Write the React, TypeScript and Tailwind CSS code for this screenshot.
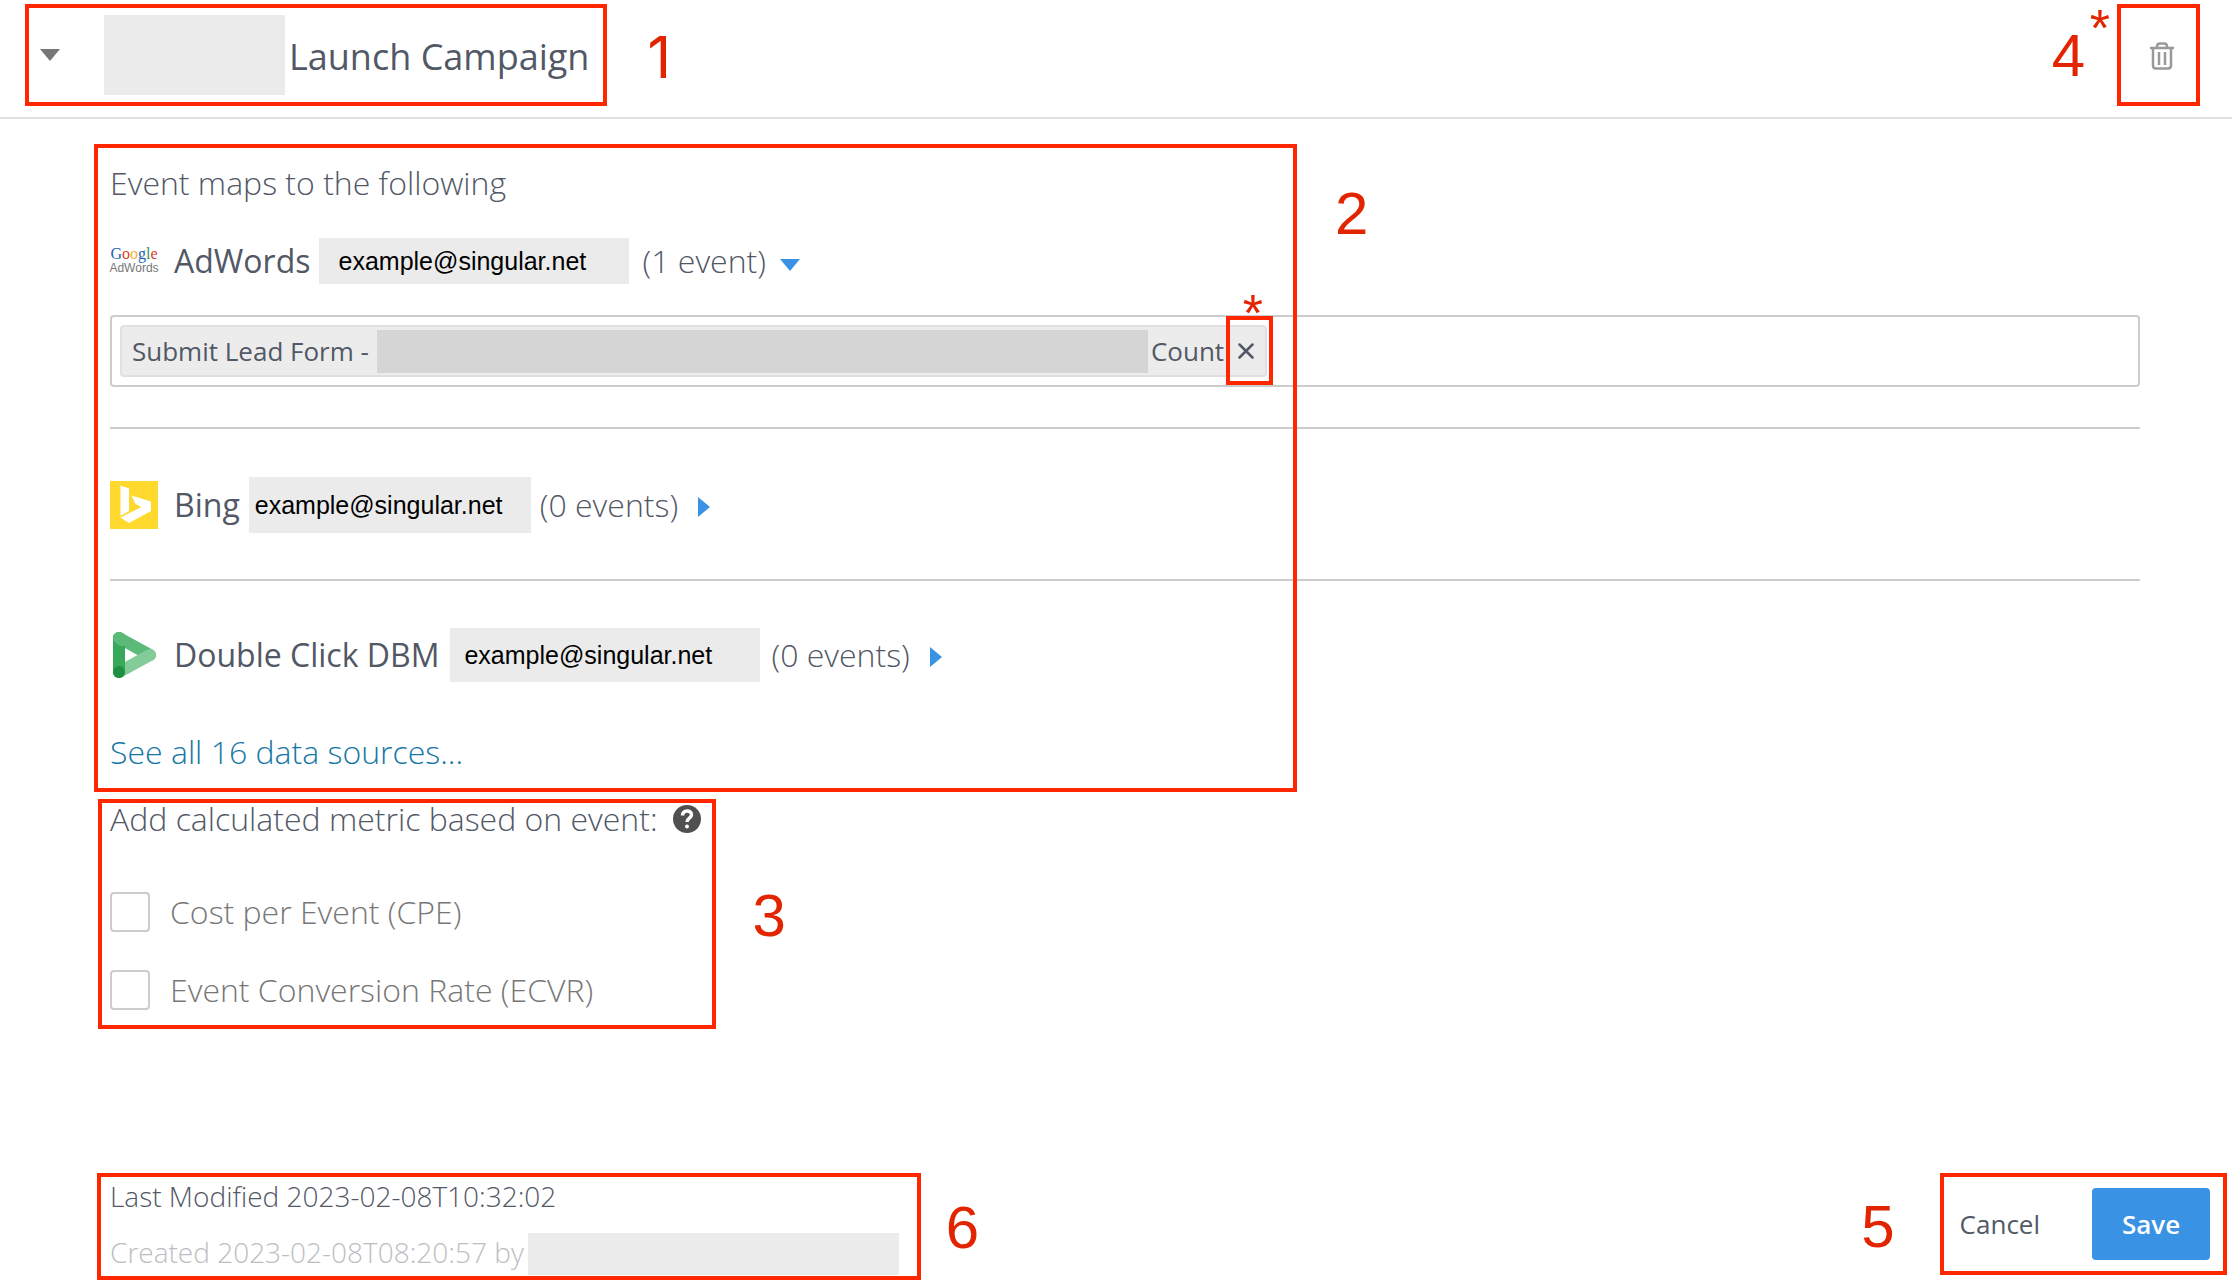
import { useState, type ReactNode } from 'react'
import clsx from 'clsx'

interface FrameProps {
  className?: string
}

function Frame({ className = 'inset-0' }: FrameProps) {
  return (
    <div
      className={clsx(
        'pointer-events-none absolute border-4 border-[#ff2600]',
        className
      )}
    />
  )
}

interface MarkProps {
  className: string
  children: ReactNode
}

function Mark({ className, children }: MarkProps) {
  return (
    <span
      className={clsx(
        'pointer-events-none absolute leading-none text-[#e22400]',
        className
      )}
    >
      {children}
    </span>
  )
}

interface CaretProps {
  open: boolean
  className: string
}

function Caret({ open, className }: CaretProps) {
  return open ? (
    <svg width="20" height="12" viewBox="0 0 20 12" className={className}>
      <path d="M0 0h20L10 12z" fill="currentColor" />
    </svg>
  ) : (
    <svg width="12" height="20" viewBox="0 0 12 20" className={className}>
      <path d="M0 0l12 10L0 20z" fill="currentColor" />
    </svg>
  )
}

function AdWordsLogo() {
  return (
    <span className="flex w-12 shrink-0 flex-col items-center leading-none">
      <span className="font-['Liberation_Serif',serif] text-[16px] leading-[14px]">
        <span className="text-[#1a62b5]">G</span>
        <span className="text-[#dc3a2c]">o</span>
        <span className="text-[#f0b51e]">o</span>
        <span className="text-[#1a62b5]">g</span>
        <span className="text-[#2f9a48]">l</span>
        <span className="text-[#dc3a2c]">e</span>
      </span>
      <span className="font-['Liberation_Sans',sans-serif] text-[12px] leading-[14px] text-[#777]">
        AdWords
      </span>
    </span>
  )
}

function BingLogo() {
  return (
    <svg width="48" height="48" viewBox="0 0 48 48" className="shrink-0">
      <path d="M0 0h48v48H0z" fill="#ffd92e" />
      <path d="M10.500 4.500l8.500 3V30l-8.500 5z" fill="#fff" />
      <path
        d="M10.500 36.500l21-10.500-6-3-4-8.500 19.500 6V30L19 42z"
        fill="#fff"
      />
    </svg>
  )
}

function DbmLogo() {
  return (
    <svg
      width="48"
      height="48"
      viewBox="0 0 48 48"
      fill="none"
      strokeWidth="12"
      strokeLinecap="round"
      className="shrink-0"
    >
      <path d="M9 7l31 17" stroke="#5cba78" />
      <path d="M9 41l31-17" stroke="#84cb9a" />
      <path d="M9 7v34" stroke="#38a85a" />
      <path d="M9 7l3 2" stroke="#5cba78" />
      <circle cx="9" cy="41" r="6" fill="#1f8f42" />
    </svg>
  )
}

function TrashIcon() {
  return (
    <svg
      width="24"
      height="28"
      viewBox="0 0 24 28"
      fill="none"
      stroke="#999"
      strokeWidth="2.500"
    >
      <path d="M0 6h24M7 6V4.500q0-3 3-3h4q3 0 3 3V6M3 6v17.500q0 3 3 3h12q3 0 3-3V6" />
      <path d="M9 10v13M15 10v13" />
    </svg>
  )
}

function HelpIcon() {
  return (
    <svg width="28" height="28" viewBox="0 0 28 28">
      <circle cx="14" cy="14" r="14" fill="#505050" />
      <path
        d="M9.500 10.500c0-6 9-6 9-.8 0 3.600-4.500 3.300-4.500 7.300"
        fill="none"
        stroke="#fff"
        strokeWidth="3.500"
      />
      <circle cx="14" cy="21.500" r="2" fill="#fff" />
    </svg>
  )
}

interface SourceRowProps {
  logo: ReactNode
  name: string
  count: string
  emailClass: string
  defaultOpen?: boolean
  className: string
}

function SourceRow({
  logo,
  name,
  count,
  emailClass,
  defaultOpen = false,
  className,
}: SourceRowProps) {
  const [open, setOpen] = useState(defaultOpen)

  return (
    <div className={clsx('flex items-center text-[32px] leading-10', className)}>
      {logo}
      <span className="ml-4">{name}</span>
      <span
        className={clsx(
          "flex items-center bg-[#ebebeb] font-['Liberation_Sans',sans-serif] text-[25px] text-black",
          emailClass
        )}
      >
        example@singular.net
      </span>
      <button
        type="button"
        onClick={() => setOpen(!open)}
        className="flex items-center font-light"
      >
        {count}
        <Caret
          open={open}
          className={clsx(
            'text-[#3a92e4]',
            open ? 'mt-2 ml-[14px]' : 'mt-1 ml-5'
          )}
        />
      </button>
    </div>
  )
}

interface MetricProps {
  id: string
  label: string
}

function Metric({ id, label }: MetricProps) {
  return (
    <div className="flex items-center gap-5">
      <input
        id={id}
        type="checkbox"
        className="size-10 shrink-0 appearance-none rounded-sm border-2 border-[#ccc] bg-white checked:bg-[#3a92e4]"
      />
      <label
        htmlFor={id}
        className="text-[32px] leading-10 font-light text-[#777]"
      >
        {label}
      </label>
    </div>
  )
}

export function App() {
  return (
    <div className="bg-white pb-1 font-['Open_Sans',sans-serif] text-[#525866]">
      <header className="flex justify-between border-b-2 border-[#e0e0e0] pt-1 pr-8 pb-[11px] pl-[25px]">
        <div className="relative flex h-[102px] items-center pr-[18px] pl-[15px]">
          <button type="button" aria-label="Collapse event">
            <Caret open className="text-[#777]" />
          </button>
          <div className="ml-11 h-20 w-[181px] bg-[#ebebeb]" />
          <h1 className="ml-1 pt-1 text-[36px]">Launch Campaign</h1>
          <Frame />
          <Mark className="top-6 left-full ml-10 font-['Inter',sans-serif] text-[58px]">
            1
          </Mark>
        </div>
        <div className="relative flex h-[102px] w-[83px] items-center justify-center pt-[2px] pl-[6px]">
          <button type="button" aria-label="Delete event">
            <TrashIcon />
          </button>
          <Frame />
          <Mark className="top-[22px] right-full mr-8 font-['Liberation_Sans',sans-serif] text-[60px]">
            4
          </Mark>
          <Mark className="-top-[2px] right-full mr-[7px] font-['Liberation_Sans',sans-serif] text-[52px]">
            *
          </Mark>
        </div>
      </header>

      <main className="pr-[92px] pl-[110px]">
        <section className="relative pt-11">
          <h2 className="text-[32px] leading-10 font-light">
            Event maps to the following
          </h2>

          <SourceRow
            logo={<AdWordsLogo />}
            name="AdWords"
            count="(1 event)"
            emailClass="ml-2 mr-[14px] h-[46px] w-[310px] pl-5"
            defaultOpen
            className="mt-[35px]"
          />
          <div className="mt-[31px] flex h-[72px] items-center rounded-sm border-2 border-[#ccc] pl-2">
            <div className="relative flex h-[52px] shrink-0 items-center rounded-sm border-2 border-[#e0e0e0] bg-[#ececec] pr-[11px] pl-[10px] text-[26px]">
              <span>Submit Lead Form -</span>
              <span className="ml-2 h-[43px] w-[771px] bg-[#d5d5d5]" />
              <span className="ml-[3px]">Count</span>
              <button type="button" aria-label="Remove event" className="ml-[14px]">
                <svg
                  width="16"
                  height="16"
                  viewBox="0 0 16 16"
                  stroke="currentColor"
                  strokeWidth="2.500"
                  strokeLinecap="round"
                >
                  <path d="M1.500 1.500l13 13M14.500 1.500l-13 13" />
                </svg>
              </button>
              <Frame className="-top-[11px] -right-[8px] h-[69px] w-[47px]" />
              <Mark className="-top-10 right-[2px] font-['Liberation_Sans',sans-serif] text-[52px]">
                *
              </Mark>
            </div>
            <input
              type="text"
              aria-label="Add event"
              className="h-full min-w-0 flex-1 px-4 text-[26px] outline-none"
            />
          </div>

          <hr className="mt-10 border-t-2 border-[#ccc]" />
          <SourceRow
            logo={<BingLogo />}
            name="Bing"
            count="(0 events)"
            emailClass="ml-[9px] mr-[9px] h-14 w-[282px] pl-[6px]"
            className="mt-12"
          />
          <hr className="mt-[46px] border-t-2 border-[#ccc]" />
          <SourceRow
            logo={<DbmLogo />}
            name="Double Click DBM"
            count="(0 events)"
            emailClass="ml-[11px] mr-[11px] h-[54px] w-[310px] pl-[14px]"
            className="mt-[47px]"
          />

          <a
            href="#sources"
            className="mt-[50px] block w-fit text-[32px] leading-10 font-light text-[#1577a5]"
          >
            See all 16 data sources...
          </a>
          <Frame className="top-[25px] -bottom-5 -left-4 w-[1203px]" />
          <Mark className="top-[65px] left-[1225px] font-['Liberation_Sans',sans-serif] text-[60px]">
            2
          </Mark>
        </section>

        <section className="relative mt-[27px] w-fit">
          <div className="flex items-center gap-[15px]">
            <h2 className="text-[32px] leading-10 font-light">
              Add calculated metric based on event:
            </h2>
            <button type="button" aria-label="Help">
              <HelpIcon />
            </button>
          </div>
          <div className="mt-[53px] flex flex-col gap-[38px]">
            <Metric id="cpe" label="Cost per Event (CPE)" />
            <Metric id="ecvr" label="Event Conversion Rate (ECVR)" />
          </div>
          <Frame className="top-0 -right-[15px] -bottom-[19px] -left-3" />
          <Mark className="top-[87px] left-full ml-[52px] font-['Liberation_Sans',sans-serif] text-[60px]">
            3
          </Mark>
        </section>
      </main>

      <footer className="mt-[158px] flex items-center justify-between pr-[5px] pl-[110px]">
        <div className="relative text-[28px] leading-[56px] font-light">
          <p>Last Modified 2023-02-08T10:32:02</p>
          <p className="flex items-center text-[#bcbec3]">
            Created 2023-02-08T08:20:57 by
            <span className="ml-1 mt-1 h-[42px] w-[371px] bg-[#ebebeb]" />
          </p>
          <Frame className="top-[5px] -right-[22px] bottom-0 -left-[13px]" />
          <Mark className="top-[30px] left-full ml-[47px] font-['Liberation_Sans',sans-serif] text-[60px] font-normal">
            6
          </Mark>
        </div>
        <div className="relative flex h-[102px] items-center pr-[17px] pl-5 text-[26px]">
          <button type="button" className="font-medium">
            Cancel
          </button>
          <button
            type="button"
            className="ml-[52px] h-[72px] w-[118px] rounded-sm bg-[#3a92e4] font-semibold text-white"
          >
            Save
          </button>
          <Frame />
          <Mark className="top-6 right-full mr-[45px] font-['Liberation_Sans',sans-serif] text-[60px]">
            5
          </Mark>
        </div>
      </footer>
    </div>
  )
}

export default App
